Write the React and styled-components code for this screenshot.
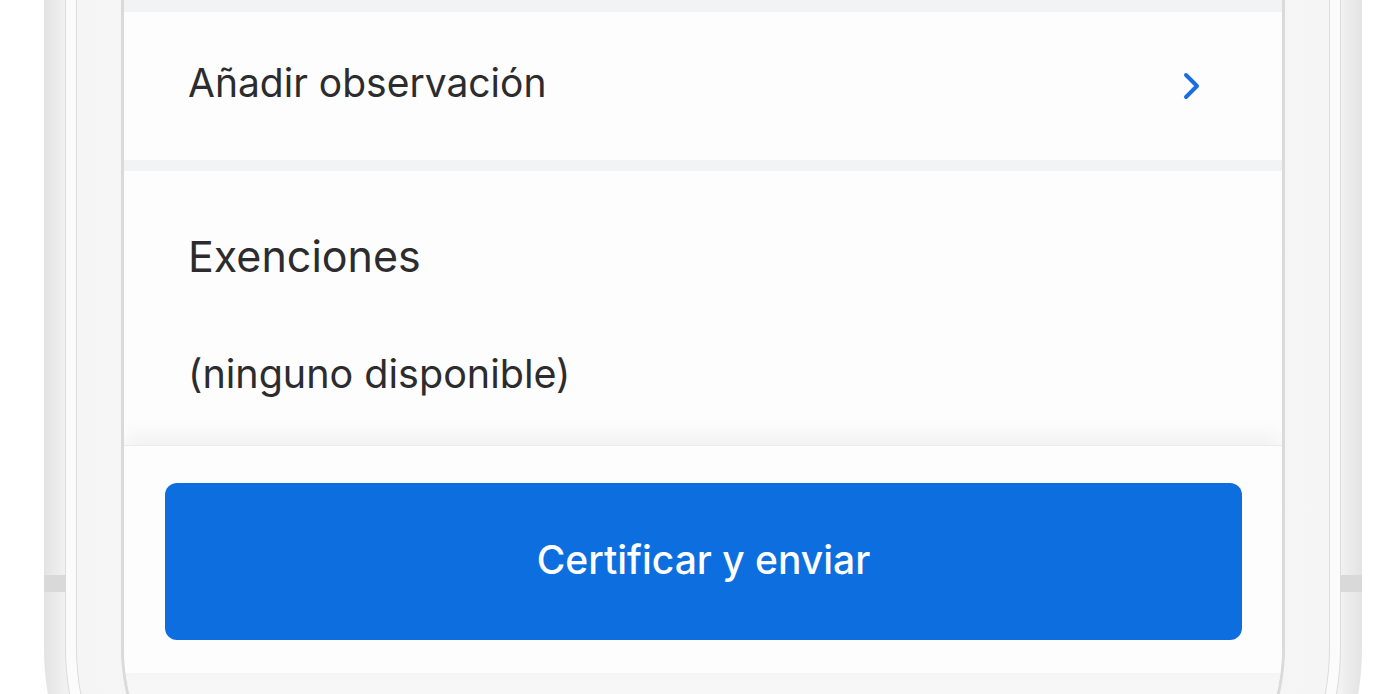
import React from 'react'
import styled, { createGlobalStyle } from 'styled-components'

const Global = createGlobalStyle`
  html, body {
    margin: 0;
    padding: 0;
    background: #ffffff;
  }
  * {
    box-sizing: border-box;
  }
`

const Viewport = styled.div`
  height: 100vh;
  overflow: hidden;
  display: flex;
  align-items: flex-start;
  padding-left: 44px;
  background: #ffffff;
`

const Phone = styled.div`
  position: relative;
  flex-shrink: 0;
  width: 1318px;
  height: 928px;
  padding: 0 21px 21px;
  border-radius: 0 0 280px 280px;
  background: linear-gradient(
    90deg,
    #e3e3e3 0,
    #f1f1f1 21px,
    #f1f1f1 calc(100% - 21px),
    #e3e3e3 100%
  );
  display: flex;
`

const SideButton = styled.div`
  position: absolute;
  top: 575px;
  width: 22px;
  height: 17px;
  background: #d9d9d9;
  ${(p) => (p.$right ? 'right: 0;' : 'left: 0;')}
`

const Rim = styled.div`
  flex: 1;
  display: flex;
  padding: 0 10px 10px;
  border: 1px solid #dcdcdc;
  border-top: none;
  border-radius: 0 0 259px 259px;
  background: #fbfbfb;
`

const Bezel = styled.div`
  flex: 1;
  display: flex;
  padding: 0 44px 44px;
  border: 1px solid #dcdcdc;
  border-top: none;
  border-radius: 0 0 248px 248px;
  background: linear-gradient(90deg, #f5f5f5 0, #fafafa 50%, #f5f5f5 100%);
`

const Screen = styled.div`
  flex: 1;
  display: flex;
  flex-direction: column;
  overflow: hidden;
  border: 3px solid #dadada;
  border-top: none;
  border-radius: 0 0 203px 203px;
  background: #f3f4f6;
  font-family: Inter, 'Liberation Sans', sans-serif;
  color: #2c2c2e;
`

const Gap = styled.div`
  height: ${(p) => p.$h}px;
  flex-shrink: 0;
  background: #f2f3f5;
`

const Row = styled.div`
  height: 148px;
  flex-shrink: 0;
  display: flex;
  align-items: center;
  justify-content: space-between;
  padding: 0 81px 0 64px;
  background: #fdfdfd;
  font-size: 39px;
`

const RowLabel = styled.span`
  margin-top: -8px;
`

const Section = styled.div`
  flex-shrink: 0;
  height: 274px;
  padding: 61px 64px 0;
  background: #fdfdfd;
`

const Heading = styled.h2`
  margin: 0;
  font-size: 43px;
  line-height: 48px;
  font-weight: 400;
`

const Empty = styled.p`
  margin: 72px 0 0;
  font-size: 39.5px;
  line-height: 44px;
`

const Footer = styled.div`
  flex-shrink: 0;
  height: 228px;
  padding: 37px 40px 34px 41px;
  background: #fdfdfd;
  border-top: 1px solid #ebebeb;
  box-shadow: 0 -10px 22px rgba(0, 0, 0, 0.05);
  position: relative;
`

const Button = styled.button`
  width: 100%;
  height: 157px;
  border: none;
  border-radius: 12px;
  background: #0d6fdf;
  color: #ffffff;
  font-family: Inter, 'Liberation Sans', sans-serif;
  font-size: 39px;
  font-weight: 500;
  padding: 0 0 4px;
  cursor: pointer;
`

const HomeArea = styled.div`
  flex: 1;
  background: linear-gradient(180deg, #f6f6f6 0, #f8f8f8 40px);
`

const Chevron = () => (
  <svg width="18" height="28" viewBox="0 0 18 28" fill="none">
    <path
      d="M3 3 L14 14 L3 25"
      stroke="#1a6fe0"
      strokeWidth="4"
      strokeLinecap="round"
      strokeLinejoin="round"
    />
  </svg>
)

export default function App() {
  return (
    <>
      <Global />
      <Viewport>
        <Phone>
          <SideButton />
          <SideButton $right />
          <Rim>
            <Bezel>
              <Screen>
                <Gap $h={12} />
                <Row>
                  <RowLabel>Añadir observación</RowLabel>
                  <Chevron />
                </Row>
                <Gap $h={11} />
                <Section>
                  <Heading>Exenciones</Heading>
                  <Empty>(ninguno disponible)</Empty>
                </Section>
                <Footer>
                  <Button>Certificar y enviar</Button>
                </Footer>
                <HomeArea />
              </Screen>
            </Bezel>
          </Rim>
        </Phone>
      </Viewport>
    </>
  )
}
